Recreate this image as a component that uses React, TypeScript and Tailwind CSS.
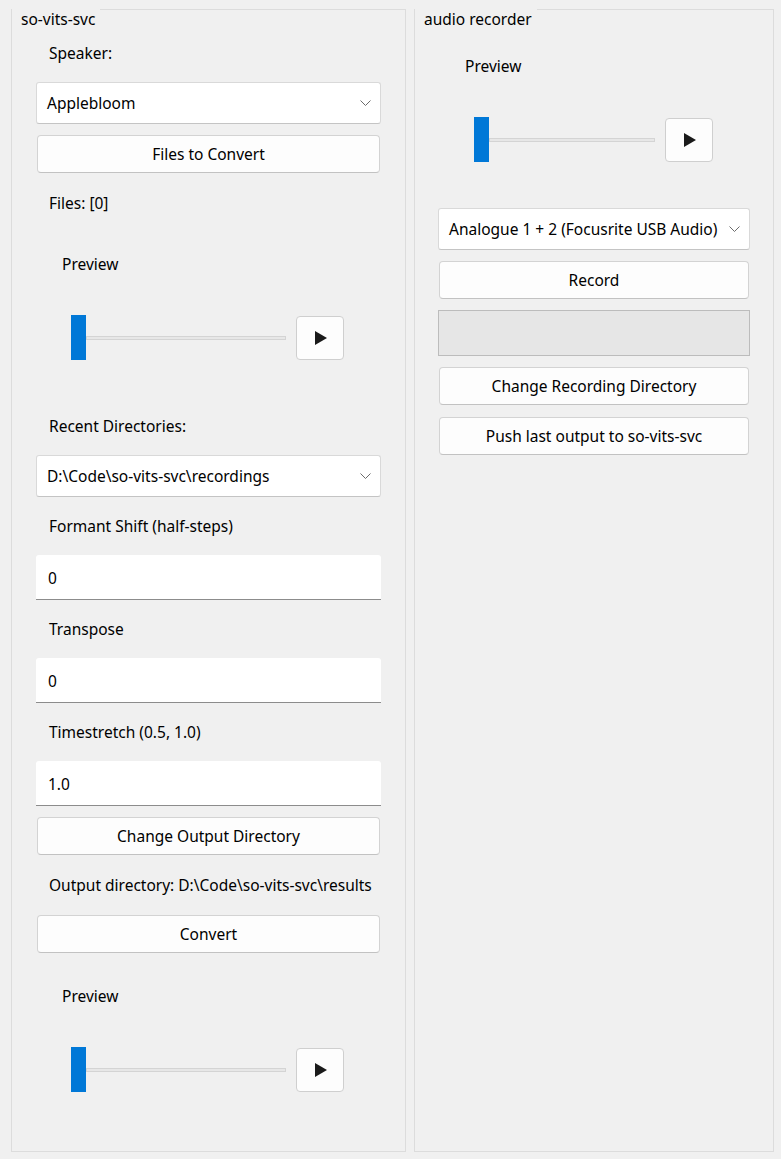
import React from 'react';

const font = { fontFamily: '"Segoe UI", "Noto Sans", "Open Sans", sans-serif' };

const Chevron = () => (
    <svg width="11" height="6" viewBox="0 0 11 6" className="shrink-0">
        <path d="M0.5 0.5 L5.5 5.5 L10.5 0.5" fill="none" stroke="#6b6b6b" strokeWidth="1" />
    </svg>
);

const PlayIcon = () => (
    <svg width="12" height="14" viewBox="0 0 12 14">
        <path d="M0 0 L12 7 L0 14 Z" fill="#1a1a1a" />
    </svg>
);

const Label = ({ children, className = '' }: { children: React.ReactNode; className?: string }) => (
    <div className={`h-5 leading-5 text-[15.5px] text-black whitespace-nowrap ${className}`}>{children}</div>
);

const Combo = ({ value, className = '' }: { value: string; className?: string }) => (
    <div className={`h-[42px] flex items-center justify-between bg-white border border-[#d9d9d9] border-b-[#c4c4c4] rounded-[3px] pl-[10px] pr-[9px] text-[15.5px] text-black ${className}`}>
        <span className="whitespace-nowrap pt-[2px]">{value}</span>
        <Chevron />
    </div>
);

const Button = ({ children, className = '' }: { children: React.ReactNode; className?: string }) => (
    <div className={`h-[38px] flex items-center justify-center bg-[#fdfdfd] border border-[#d3d3d3] border-b-[#c2c2c2] rounded-[4px] pt-[2px] text-[15.5px] text-black ${className}`}>
        {children}
    </div>
);

const TextInput = ({ value, className = '' }: { value: string; className?: string }) => (
    <div className={`h-[45px] flex items-center bg-white border-b border-[#8c8c8c] rounded-t-[3px] pl-[12px] pt-[3px] text-[15.5px] text-black ${className}`}>
        {value}
    </div>
);

const Player = ({ className = '', track = 'w-[200px]' }: { className?: string; track?: string }) => (
    <div className={`flex items-center ${className}`}>
        <div className="w-[15px] h-[45px] bg-[#0078d7]" />
        <div className={`${track} h-[4px] bg-[#e7e7e7] border border-[#d4d4d4]`} />
        <div className="ml-[10px] w-[48px] h-[44px] flex items-center justify-center bg-[#fdfdfd] border border-[#cfcfcf] rounded-[4px]">
            <span className="pl-[2px] flex"><PlayIcon /></span>
        </div>
    </div>
);

const GroupBox = ({ title, className = '', children }: { title: string; className?: string; children: React.ReactNode }) => (
    <div className={`relative border border-[#dcdcdc] ${className}`}>
        <div className="absolute left-0 top-[-1px] bg-[#f0f0f0] pl-[9px] pr-[5px] h-[20px] leading-[20px] text-[15.5px] text-black">
            {title}
        </div>
        {children}
    </div>
);

export default function App() {
    return (
        <div className="w-[781px] h-[1159px] bg-[#f0f0f0] flex gap-[8px] pl-[11px] pt-[9px] pr-[7px] pb-[7px]" style={font}>
            <GroupBox title="so-vits-svc" className="w-[395px] flex flex-col">
                <div className="flex flex-col px-[24px]">
                    <Label className="mt-[33px] pl-[13px]">Speaker:</Label>
                    <Combo value="Applebloom" className="mt-[19px]" />
                    <Button className="mt-[11px] mx-[1px]">Files to Convert</Button>
                    <Label className="mt-[20px] pl-[13px]">Files: [0]</Label>
                    <Label className="mt-[41px] pl-[26px]">Preview</Label>
                    <Player className="mt-[41px] pl-[35px]" />
                    <Label className="mt-[56px] pl-[13px]">Recent Directories:</Label>
                    <Combo value="D:\Code\so-vits-svc\recordings" className="mt-[19px]" />
                    <Label className="mt-[19px] pl-[13px]">Formant Shift (half-steps)</Label>
                    <TextInput value="0" className="mt-[19px]" />
                    <Label className="mt-[19px] pl-[13px]">Transpose</Label>
                    <TextInput value="0" className="mt-[19px]" />
                    <Label className="mt-[19px] pl-[13px]">Timestretch (0.5, 1.0)</Label>
                    <TextInput value="1.0" className="mt-[19px]" />
                    <Button className="mt-[11px] mx-[1px]">Change Output Directory</Button>
                    <Label className="mt-[20px] pl-[13px]">Output directory: D:\Code\so-vits-svc\results</Label>
                    <Button className="mt-[20px] mx-[1px]">Convert</Button>
                    <Label className="mt-[33px] pl-[26px]">Preview</Label>
                    <Player className="mt-[41px] pl-[35px]" />
                </div>
            </GroupBox>
            <GroupBox title="audio recorder" className="w-[360px] flex flex-col">
                <div className="flex flex-col px-[23px]">
                    <Label className="mt-[46px] pl-[27px]">Preview</Label>
                    <Player className="mt-[41px] pl-[36px]" track="w-[166px]" />
                    <Combo value="Analogue 1 + 2 (Focusrite USB Audio)" className="mt-[46px]" />
                    <Button className="mt-[11px] mx-[1px]">Record</Button>
                    <div className="mt-[11px] h-[46px] bg-[#e6e6e6] border border-[#bcbcbc]" />
                    <Button className="mt-[11px] mx-[1px]">Change Recording Directory</Button>
                    <Button className="mt-[12px] mx-[1px]">Push last output to so-vits-svc</Button>
                </div>
            </GroupBox>
        </div>
    );
}
